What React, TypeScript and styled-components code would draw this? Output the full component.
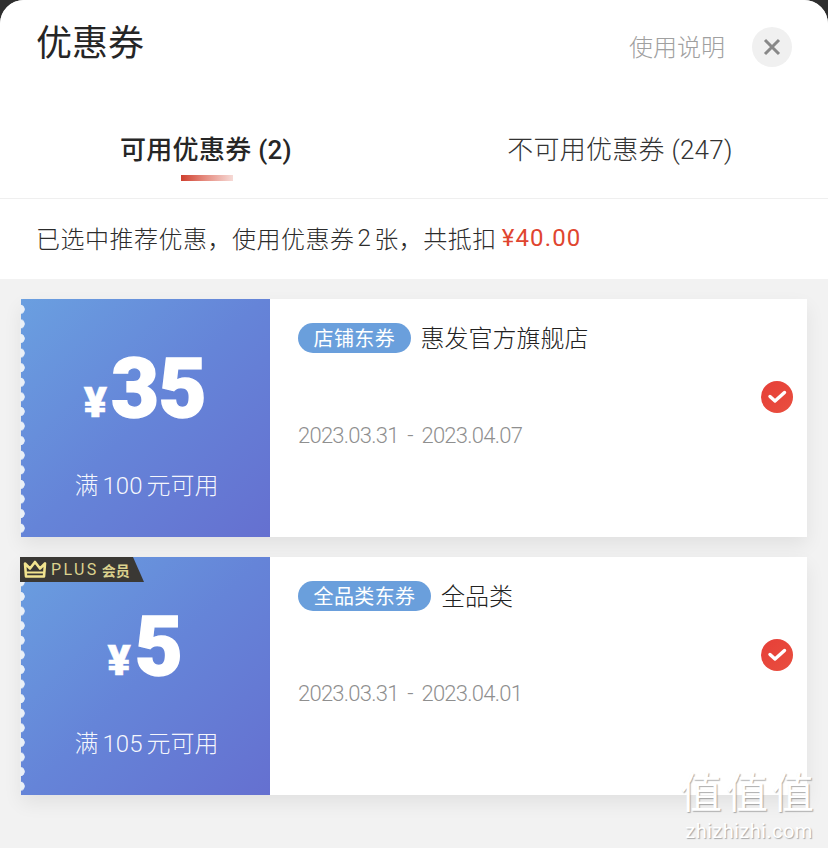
import React from "react";
import styled, { createGlobalStyle } from "styled-components";

const Global = createGlobalStyle`
  html, body { margin: 0; padding: 0; background: #2e2e2e; }
  body { font-family: "Roboto", "Noto Sans CJK SC", sans-serif; }
  * { box-sizing: border-box; }
`;

const Sheet = styled.div`
  position: relative;
  width: 828px;
  height: 848px;
  overflow: hidden;
  background: #f2f2f2;
  border-radius: 24px 24px 0 0;
`;

const Header = styled.header`
  background: #fff;
`;

const TitleRow = styled.div`
  display: flex;
  align-items: flex-start;
  height: 108px;
  padding: 0 36px 0 36px;
`;

const Title = styled.h1`
  flex: 1;
  margin: 14px 0 0;
  font-size: 36px;
  line-height: 52px;
  font-weight: 400;
  color: #262626;
  font-family: "Noto Sans CJK SC", sans-serif;
`;

const Help = styled.span`
  margin: 28px 27px 0 0;
  font-size: 24px;
  line-height: 36px;
  color: #a0a0a0;
  font-family: "Noto Sans CJK SC", sans-serif;
  font-weight: 300;
`;

const Close = styled.span`
  display: flex;
  align-items: center;
  justify-content: center;
  width: 40px;
  height: 40px;
  margin-top: 27px;
  border-radius: 50%;
  background: #f0f0f0;
`;

const Tabs = styled.div`
  display: grid;
  grid-template-columns: 1fr 1fr;
  height: 91px;
  border-bottom: 1px solid #efefef;
`;

const Tab = styled.div<{ $active?: boolean }>`
  position: relative;
  padding-top: 23px;
  text-align: center;
  font-size: 26px;
  line-height: 38px;
  font-weight: ${(p) => (p.$active ? 500 : 300)};
  color: ${(p) => (p.$active ? "#262626" : "#333")};
  font-family: "Roboto", "Noto Sans CJK SC", sans-serif;
  letter-spacing: ${(p) => (p.$active ? "0.3px" : "0.25px")};
  padding-right: ${(p) => (p.$active ? "2px" : "2px")};
`;

const TabBar = styled.span`
  position: absolute;
  left: 181px;
  top: 67px;
  width: 52px;
  height: 6px;
  background: linear-gradient(90deg, #cf3f2e 0%, #e58a7e 45%, #f6dad6 100%);
`;

const Summary = styled.div`
  display: flex;
  align-items: center;
  height: 80px;
  padding: 0 0 3px 36px;
  font-size: 24px;
  font-weight: 300;
  letter-spacing: 0.5px;
  color: #2c2c2c;
  font-family: "Roboto", "Noto Sans CJK SC", sans-serif;
  white-space: pre;
`;

const Count = styled.span`
  margin: 0 3px;
`;

const Money = styled.span`
  color: #e0452f;
  font-weight: 400;
  letter-spacing: 1.1px;
  margin-left: 5px;
`;

const List = styled.main`
  display: flex;
  flex-direction: column;
  gap: 20px;
  padding: 20px 21px 0;
`;

const Card = styled.section`
  position: relative;
  display: flex;
  height: 238px;
  background: #fff;
  box-shadow: 0 8px 18px rgba(0, 0, 0, 0.07);
`;

const Left = styled.div`
  position: relative;
  display: flex;
  flex-direction: column;
  align-items: center;
  width: 249px;
  padding: 46px 0 0 2px;
  color: #fff;
  background: linear-gradient(135deg, #6a9fe0 0%, #6584d8 50%, #6570d0 100%);
`;

const Scallop = styled.span`
  position: absolute;
  left: -1px;
  top: 0;
  bottom: 0;
  width: 5px;
  background: radial-gradient(circle at 0 50%, #eaf0f7 4.4px, transparent 5px) 0 3px / 5px 14.6px repeat-y;
`;

const Amount = styled.div`
  display: flex;
  align-items: baseline;
  font-family: "Roboto", sans-serif;
  font-weight: 900;
  height: 88px;
  margin-left: -3px;
`;

const Yen = styled.span`
  font-size: 43px;
  line-height: 88px;
  margin-right: 4px;
  -webkit-text-stroke: 0.6px #fff;
`;

const Num = styled.span`
  font-size: 83px;
  line-height: 88px;
  letter-spacing: -0.5px;
  -webkit-text-stroke: 1.4px #fff;
`;

const Condition = styled.div`
  display: flex;
  align-items: baseline;
  margin-top: 35px;
  font-size: 24px;
  line-height: 36px;
  font-weight: 300;
  color: rgba(255, 255, 255, 0.94);
  font-family: "Roboto", "Noto Sans CJK SC", sans-serif;
  white-space: pre;
`;

const Threshold = styled.span`
  margin: 0 4px;
`;

const Body = styled.div`
  flex: 1;
  display: flex;
  padding: 24px 14px 0 28px;
`;

const Info = styled.div`
  flex: 1;
`;

const TitleLine = styled.div`
  display: flex;
  align-items: center;
  gap: 10px;
  height: 30px;
`;

const Pill = styled.span`
  display: flex;
  align-items: center;
  height: 30px;
  padding: 0 15.5px 2px;
  border-radius: 15px;
  background: #6a9fdc;
  color: #fff;
  font-size: 20px;
  letter-spacing: 0.4px;
  font-family: "Noto Sans CJK SC", sans-serif;
  font-weight: 400;
`;

const Name = styled.span`
  font-size: 24px;
  line-height: 30px;
  font-weight: 300;
  color: #222;
  padding-bottom: 3px;
  font-family: "Noto Sans CJK SC", sans-serif;
`;

const Dates = styled.div`
  margin-top: 68px;
  font-family: "Roboto", sans-serif;
  font-weight: 300;
  font-size: 22px;
  line-height: 30px;
  letter-spacing: -0.75px;
  word-spacing: 4px;
  color: #8f8f8f;
  white-space: pre;
`;

const CheckMark = styled.span`
  display: flex;
  align-items: center;
  justify-content: center;
  width: 32px;
  height: 32px;
  margin-top: 58px;
  border-radius: 50%;
  background: linear-gradient(135deg, #e63f38, #e94f3f);
`;

const PlusBadge = styled.div`
  position: absolute;
  left: -1px;
  top: 0;
  display: flex;
  align-items: center;
  gap: 3px;
  width: 124px;
  height: 25px;
  padding-left: 2px;
  background: #3a3834;
  clip-path: polygon(0 0, 113px 0, 100% 100%, 0 100%);
  color: #dcd28e;
`;

const PlusText = styled.span`
  font-family: "Roboto", sans-serif;
  font-size: 16px;
  letter-spacing: 2.4px;
  font-weight: 400;
`;

const PlusCn = styled.span`
  font-family: "Noto Sans CJK SC", sans-serif;
  font-size: 14px;
  font-weight: 700;
`;

const Watermark = styled.div`
  position: absolute;
  right: 8px;
  top: 760px;
  width: 142px;
  text-align: center;
  color: #fff;
  text-shadow: 1px 1px 1px rgba(120, 120, 120, 0.6);
  font-family: "Noto Sans CJK SC", sans-serif;
`;

const WmGlyphs = styled.div`
  font-size: 42px;
  line-height: 60px;
  letter-spacing: 4px;
  font-weight: 400;
`;

const WmUrl = styled.div`
  font-family: "Roboto", sans-serif;
  font-size: 20px;
  line-height: 22px;
  letter-spacing: 0.4px;
`;

const CloseIcon = () => (
  <svg width="18" height="18" viewBox="0 0 18 18" fill="none">
    <path d="M2 2 L16 16 M16 2 L2 16" stroke="#888" strokeWidth="3" />
  </svg>
);

const CheckIcon = () => (
  <svg width="20" height="16" viewBox="0 0 20 16" fill="none">
    <path d="M3 7.5 L8 12 L17.5 3.5" stroke="#fff" strokeWidth="3.4" strokeLinecap="round" strokeLinejoin="round" />
  </svg>
);

const Crown = () => (
  <svg width="26" height="19" viewBox="0 0 26 19" fill="none">
    <path
      d="M3 3.5 L8 8.5 L13 2 L18 8.5 L23 3.5 L22 16.5 H4 Z"
      stroke="#f2e48f"
      strokeWidth="2.6"
      strokeLinejoin="round"
    />
    <path d="M5 12.5 H21" stroke="#f2e48f" strokeWidth="2" />
  </svg>
);

type Coupon = { num: string; min: string; pill: string; name: string; dates: string; plus?: boolean };

const coupons: Coupon[] = [
  { num: "35", min: "100", pill: "店铺东券", name: "惠发官方旗舰店", dates: "2023.03.31 - 2023.04.07" },
  { num: "5", min: "105", pill: "全品类东券", name: "全品类", dates: "2023.03.31 - 2023.04.01", plus: true },
];

export default function App() {
  return (
    <>
      <Global />
      <Sheet>
        <Header>
          <TitleRow>
            <Title>优惠券</Title>
            <Help>使用说明</Help>
            <Close>
              <CloseIcon />
            </Close>
          </TitleRow>
          <Tabs>
            <Tab $active>
              可用优惠券 (2)
              <TabBar />
            </Tab>
            <Tab>不可用优惠券 (247)</Tab>
          </Tabs>
          <Summary>
            已选中推荐优惠，使用优惠券<Count>2</Count>张，共抵扣<Money>¥40.00</Money>
          </Summary>
        </Header>
        <List>
          {coupons.map((c) => (
            <Card key={c.num}>
              <Left>
                <Scallop />
                <Amount>
                  <Yen>¥</Yen>
                  <Num>{c.num}</Num>
                </Amount>
                <Condition>
                  满<Threshold>{c.min}</Threshold>元可用
                </Condition>
              </Left>
              <Body>
                <Info>
                  <TitleLine>
                    <Pill>{c.pill}</Pill>
                    <Name>{c.name}</Name>
                  </TitleLine>
                  <Dates>{c.dates}</Dates>
                </Info>
                <CheckMark>
                  <CheckIcon />
                </CheckMark>
              </Body>
              {c.plus && (
                <PlusBadge>
                  <Crown />
                  <PlusText>PLUS</PlusText>
                  <PlusCn>会员</PlusCn>
                </PlusBadge>
              )}
            </Card>
          ))}
        </List>
        <Watermark>
          <WmGlyphs>值值值</WmGlyphs>
          <WmUrl>zhizhizhi.com</WmUrl>
        </Watermark>
      </Sheet>
    </>
  );
}
